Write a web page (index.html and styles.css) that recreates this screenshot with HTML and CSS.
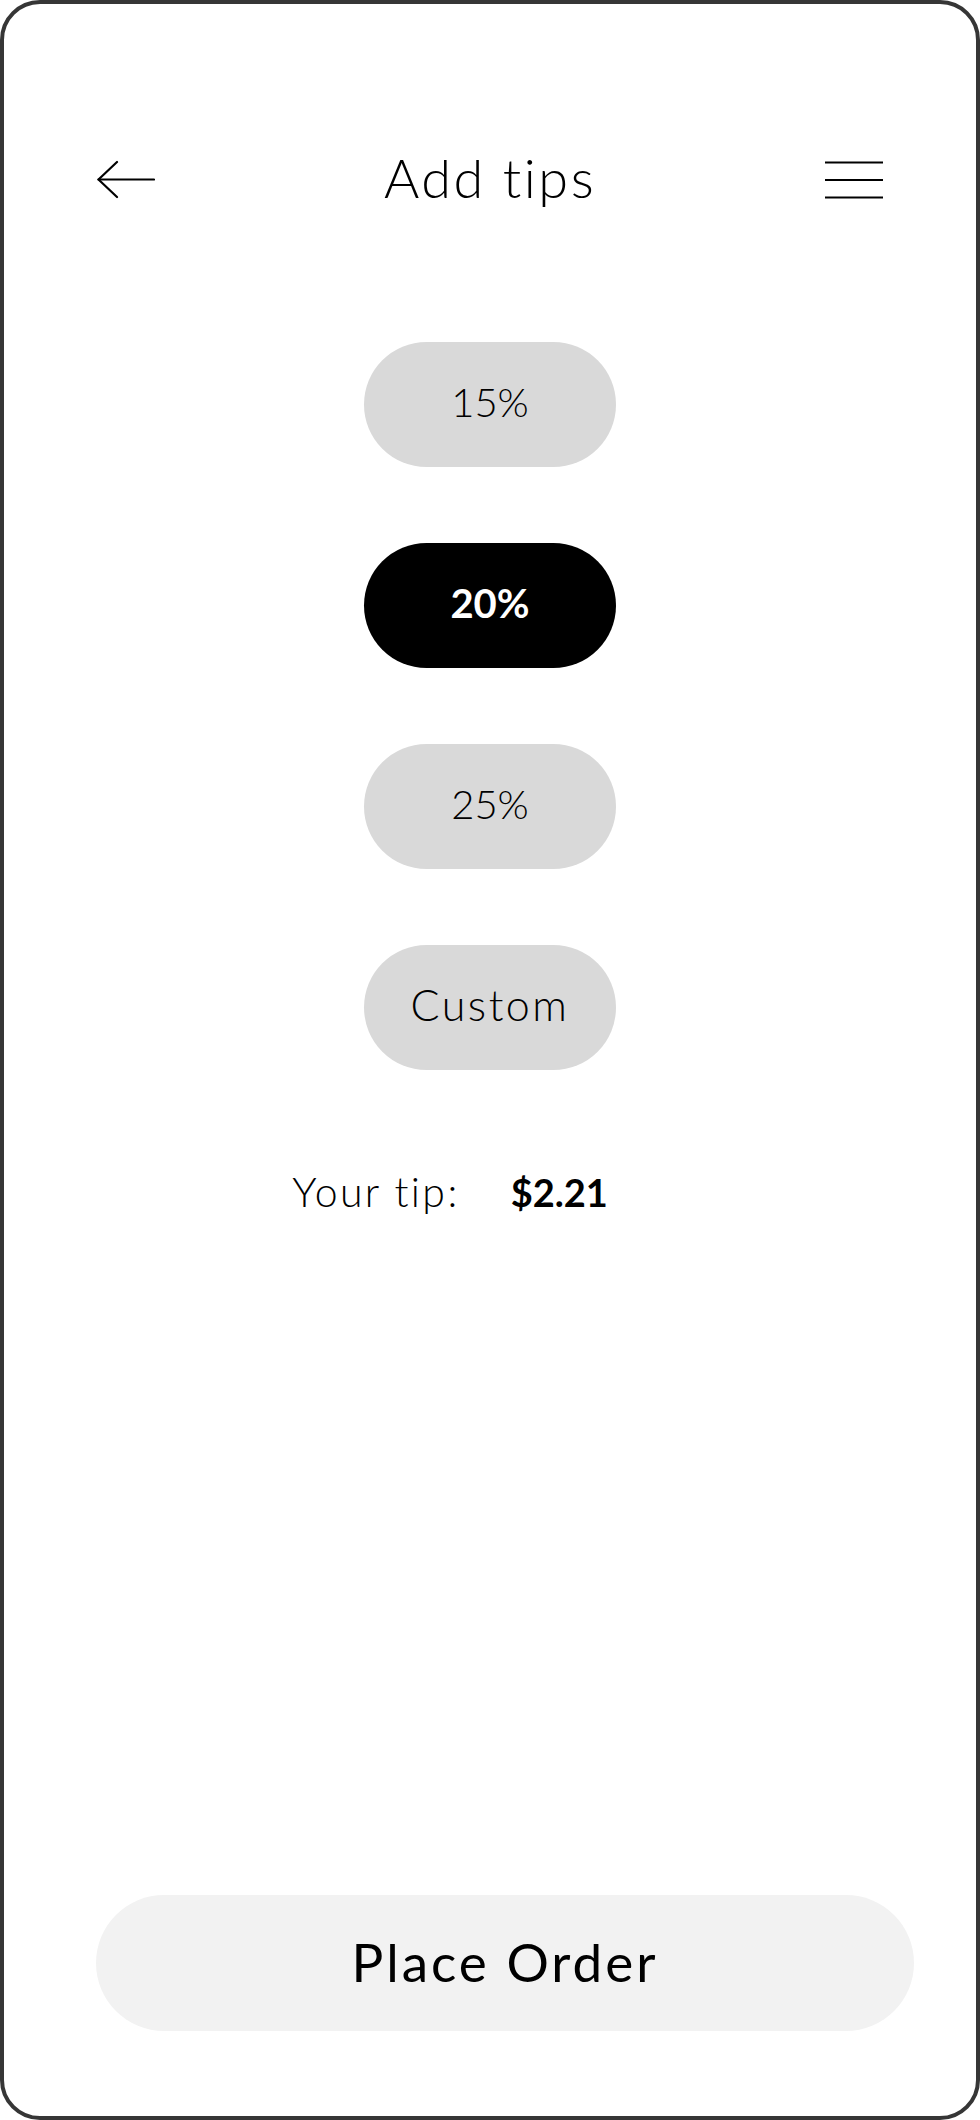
FILE: index.html
```html
<!DOCTYPE html>
<html lang="en">
<head>
<meta charset="utf-8">
<title>Add tips</title>
<link rel="stylesheet" href="styles.css">
</head>
<body>
<div class="screen">
  <header class="topbar">
    <button class="icon-btn" aria-label="Back">
      <svg width="58" height="40" viewBox="0 0 58 40" fill="none" stroke="#000" stroke-width="2.2" stroke-linecap="round" stroke-linejoin="round">
        <path d="M20 2 L1.5 19.5 L20 37"/>
        <path d="M1.5 19.5 H57"/>
      </svg>
    </button>
    <h1 class="title">Add tips</h1>
    <button class="icon-btn" aria-label="Menu">
      <svg width="58" height="40" viewBox="0 0 58 40" fill="none" stroke="#000" stroke-width="2.2">
        <path d="M0 2.5 H58"/>
        <path d="M0 20 H58"/>
        <path d="M0 37.5 H58"/>
      </svg>
    </button>
  </header>

  <div class="tips">
    <button class="tip">15%</button>
    <button class="tip tip-active">20%</button>
    <button class="tip">25%</button>
    <button class="tip tip-word">Custom</button>
  </div>

  <div class="summary">
    <span class="summary-label">Your tip:</span>
    <span class="summary-amount">$2.21</span>
  </div>

  <button class="place-order">Place Order</button>
</div>
</body>
</html>
```

FILE: styles.css
```css
* { box-sizing: border-box; }

html, body {
  margin: 0;
  padding: 0;
  background: #ffffff;
}

body {
  font-family: "Lato", "Open Sans", "Liberation Sans", sans-serif;
  color: #000;
}

.screen {
  width: 980px;
  height: 2120px;
  border: 4px solid #363636;
  border-radius: 40px;
  background: #fff;
  display: flex;
  flex-direction: column;
  padding-top: 146px;
}

.topbar {
  height: 60px;
  padding: 0 93px;
  display: flex;
  align-items: center;
  justify-content: space-between;
}

.icon-btn {
  border: 0;
  background: none;
  padding: 0;
  width: 58px;
  height: 40px;
  display: flex;
}

.title {
  margin: 0;
  font-size: 54px;
  font-weight: 300;
  line-height: 60px;
  letter-spacing: 2.5px;
  padding-bottom: 4px;
}

.tips {
  margin-top: 132px;
  display: flex;
  flex-direction: column;
  align-items: center;
  gap: 76px;
}

.tip {
  width: 252px;
  height: 125px;
  border: 0;
  border-radius: 62.5px;
  background: #d9d9d9;
  font-family: inherit;
  font-size: 40px;
  font-weight: 300;
  color: #000;
  padding: 0 0 6px;
}

.tip-word {
  font-size: 43px;
  letter-spacing: 2.5px;
}

.tip-active {
  background: #000;
  color: #fff;
  font-weight: 700;
}

.summary {
  margin-top: 98px;
  display: flex;
  justify-content: center;
  align-items: baseline;
  gap: 51px;
  padding-right: 80px;
  line-height: 48px;
}

.summary-label {
  font-size: 41px;
  font-weight: 300;
  letter-spacing: 2.4px;
}

.summary-amount {
  font-size: 38px;
  font-weight: 700;
}

.place-order {
  margin-top: auto;
  margin-bottom: 85px;
  margin-left: 92px;
  align-self: flex-start;
  width: 818px;
  height: 136px;
  border: 0;
  border-radius: 68px;
  background: #f2f2f2;
  font-family: inherit;
  font-size: 53px;
  font-weight: 400;
  letter-spacing: 3px;
  color: #000;
  padding: 0 0 4px;
}
```
